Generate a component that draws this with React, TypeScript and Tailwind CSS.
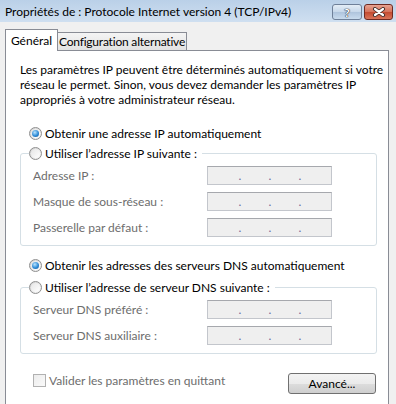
import React from 'react'

// Fenêtre "Propriétés de : Protocole Internet version 4 (TCP/IPv4)" façon Windows 7

const ipRows = ['Adresse IP :', 'Masque de sous-réseau :', 'Passerelle par défaut :']
const dnsRows = ['Serveur DNS préféré :', 'Serveur DNS auxiliaire :']

function Radio({ checked }: { checked?: boolean }) {
  return (
    <span className="flex h-[13px] w-[13px] shrink-0 items-center justify-center rounded-full border border-[#8f8f8f] bg-[linear-gradient(135deg,#d2d2d2,#f8f8f8)]">
      <span className="flex h-[9px] w-[9px] items-center justify-center rounded-full bg-[linear-gradient(135deg,#e6e6e6,#ffffff)]">
        {checked && (
          <span className="h-[7px] w-[7px] rounded-full bg-[radial-gradient(circle_at_40%_35%,#b9e4ff,#2e8bd6_55%,#0f4f93)]" />
        )}
      </span>
    </span>
  )
}

function RadioRow({ label, checked }: { label: string; checked?: boolean }) {
  return (
    <div className="flex h-[15px] items-center gap-[2px] whitespace-nowrap text-black">
      <Radio checked={checked} />
      <span className="pl-[1px]">{label}</span>
    </div>
  )
}

function IpBox() {
  return (
    <div className="flex h-[19px] w-[125px] items-center border border-[#c3c6cc] border-t-[#a6a8ad] bg-[#efefef] pl-[17px] text-[12px] leading-none text-[#6c6c9c]">
      <span className="w-[30px] text-center">.</span>
      <span className="w-[30px] text-center">.</span>
      <span className="w-[30px] text-center">.</span>
    </div>
  )
}

function Group({ legend, rows }: { legend: string; rows: string[] }) {
  return (
    <fieldset className="w-[357px] rounded-[3px] border border-[#d5dfe5] pb-[8px] pl-[12px]">
      <legend className="-ml-[4px] pr-[5px]">
        <RadioRow label={legend} />
      </legend>
      <div className="mt-[5px] flex flex-col gap-[7px]">
        {rows.map((r) => (
          <div key={r} className="flex items-center">
            <span className="w-[174px] text-[#6d6d6d]">{r}</span>
            <IpBox />
          </div>
        ))}
      </div>
    </fieldset>
  )
}

export default function App() {
  return (
    <div className="h-[404px] w-[396px] overflow-hidden bg-[#f0f0f0] font-['Lato','Liberation_Sans',sans-serif] text-[12px] leading-[15px] text-black">
      {/* barre de titre */}
      <div className="flex h-[22px] items-center justify-between bg-[linear-gradient(#bad0e8,#cfdff0)] pl-[5px]">
        <span className="text-[12px]">Propriétés de : Protocole Internet version 4 (TCP/IPv4)</span>
        <div className="flex items-center gap-[2px] self-start pt-[4px] pr-[3px]">
          <div className="flex h-[16px] w-[30px] items-center justify-center rounded-[3px] border border-[#6f8099] bg-[linear-gradient(#e4edf6,#c6d7ea_50%,#aec3dc_51%,#c9dbee)] text-[12px] font-bold text-white [text-shadow:0_0_1px_#2e3440,0_0_1px_#2e3440,0_0_1px_#2e3440]">
            ?
          </div>
          <div className="flex h-[16px] w-[29px] items-center justify-center rounded-[3px] border border-[#6e2a22] bg-[linear-gradient(#e8a493,#d47059_50%,#c24a30_51%,#d9745a)]">
            <svg width="14" height="10" viewBox="0 0 14 10">
              <path d="M3 2 L11 8 M11 2 L3 8" stroke="#3b2a28" strokeWidth="4" strokeLinecap="round" />
              <path d="M3 2 L11 8 M11 2 L3 8" stroke="#ffffff" strokeWidth="2.2" strokeLinecap="round" />
            </svg>
          </div>
        </div>
      </div>

      {/* onglets */}
      <div className="mt-[7px] flex h-[21px] items-end pl-[5px]">
        <div className="relative z-10 -mb-px flex h-[22px] w-[53px] items-start justify-center border border-b-0 border-[#898c95] bg-white pt-[3px]">
          Général
        </div>
        <div className="flex h-[18px] w-[129px] items-center justify-center whitespace-nowrap border border-b-0 border-l-0 border-[#898c95] bg-[linear-gradient(#f4f4f4,#e2e2e2)] tracking-[-0.2px]">
          Configuration alternative
        </div>
      </div>

      {/* contenu de l'onglet */}
      <div className="ml-[5px] h-[360px] w-[384px] border border-[#898c95] bg-white pl-[14px] pt-[11px]">
        <p>
          Les paramètres IP peuvent être déterminés automatiquement si votre
          <br />
          réseau le permet. Sinon, vous devez demander les paramètres IP
          <br />
          appropriés à votre administrateur réseau.
        </p>

        <div className="mt-[19px] ml-[9px]">
          <RadioRow label="Obtenir une adresse IP automatiquement" checked />
        </div>
        <div className="mt-[5px]">
          <Group legend="Utiliser l’adresse IP suivante :" rows={ipRows} />
        </div>

        <div className="mt-[12px] ml-[9px]">
          <RadioRow label="Obtenir les adresses des serveurs DNS automatiquement" checked />
        </div>
        <div className="mt-[7px]">
          <Group legend="Utiliser l’adresse de serveur DNS suivante :" rows={dnsRows} />
        </div>

        <div className="mt-[19px] flex w-[356px] items-start justify-between">
          <div className="ml-[13px] flex items-center gap-[3px] text-[#6d6d6d]">
            <span className="h-[13px] w-[13px] border border-[#b1b1b1] bg-[linear-gradient(135deg,#ececec,#fafafa)]" />
            <span>Valider les paramètres en quittant</span>
          </div>
          <button className="h-[21px] w-[88px] rounded-[3px] border border-[#707070] bg-[linear-gradient(#f3f3f3,#ebebeb_50%,#dddddd_51%,#cfcfcf)] text-[12px] text-black">
            Avancé...
          </button>
        </div>
      </div>
    </div>
  )
}
